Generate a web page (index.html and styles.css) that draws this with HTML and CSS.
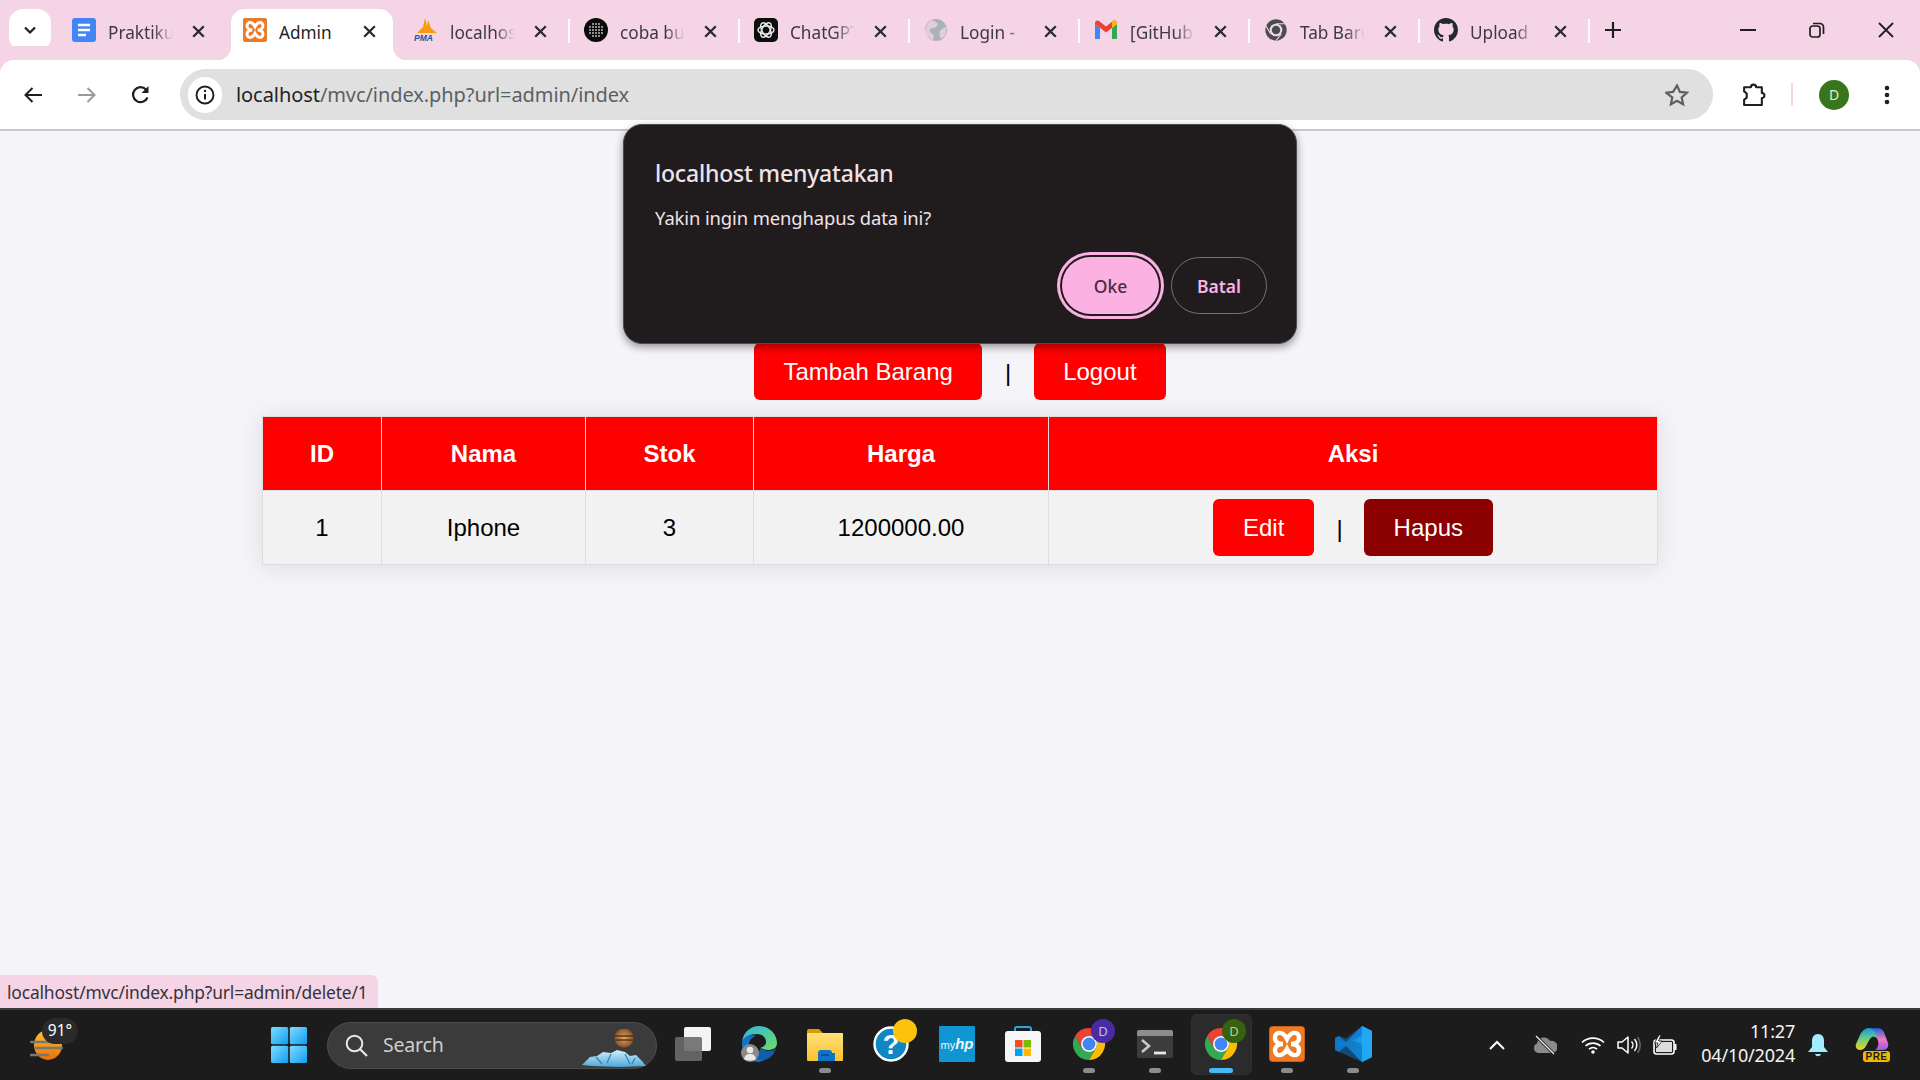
FILE: index.html
```html
<!DOCTYPE html>
<html lang="id">
<head>
<meta charset="utf-8">
<title>Admin</title>
<link rel="stylesheet" href="styles.css">
</head>
<body>
<svg class="defs" width="0" height="0" aria-hidden="true">
  <defs>
    <symbol id="xampp" viewBox="0 0 36 36">
      <rect x="0.5" y="0.5" width="35" height="35" rx="3" fill="#f07a24" stroke="#c9601a"/>
      <path d="M18 13C14 5 6 5 6 12c0 4 4 6 8 6-4 0-8 2-8 6 0 7 8 7 12-1 4 8 12 8 12 1 0-4-4-6-8-6 4 0 8-2 8-6 0-7-8-7-12 1Z" fill="none" stroke="#fff" stroke-width="4.4"/>
    </symbol>
    <symbol id="chrome" viewBox="0 0 36 36">
      <path d="M18 10H31.86A16 16 0 0 0 4.14 10L11.07 22A8 8 0 0 1 18 10Z" fill="#ea4335"/>
      <path d="M4.14 10L11.07 22A8 8 0 0 0 24.93 22L18 34A16 16 0 0 1 4.14 10Z" fill="#34a853"/>
      <path d="M31.86 10H18A8 8 0 0 1 24.93 22L18 34A16 16 0 0 0 31.86 10Z" fill="#fbbc04"/>
      <circle cx="18" cy="18" r="8" fill="#fff"/>
      <circle cx="18" cy="18" r="6.4" fill="#4285f4"/>
    </symbol>
    <symbol id="tabx" viewBox="0 0 13 13">
      <path d="M1.200 1.200l10.600 10.600M11.800 1.200L1.200 11.800" stroke="#2a2a2e" stroke-width="2.300"/>
    </symbol>
    <linearGradient id="winlogo" x1="0" y1="0" x2="1" y2="1">
      <stop offset="0" stop-color="#7fdcff"/>
      <stop offset="1" stop-color="#0f9df0"/>
    </linearGradient>
    <linearGradient id="edgeg" x1="0" y1="0" x2="1" y2="1">
      <stop offset="0" stop-color="#2bb5e0"/>
      <stop offset="1" stop-color="#6fdc6a"/>
    </linearGradient>
    <linearGradient id="sung" x1="0" y1="0" x2="0" y2="1">
      <stop offset="0" stop-color="#fcc62c"/>
      <stop offset="1" stop-color="#ee6d07"/>
    </linearGradient>
    <linearGradient id="foldg" x1="0" y1="0" x2="0" y2="1">
      <stop offset="0" stop-color="#ffe27a"/>
      <stop offset="1" stop-color="#fbc02d"/>
    </linearGradient>
    <linearGradient id="vsg" x1="0" y1="0" x2="1" y2="0">
      <stop offset="0" stop-color="#0d78c9"/>
      <stop offset="1" stop-color="#21a7f5"/>
    </linearGradient>
    <linearGradient id="copl" x1="0" y1="0" x2="0" y2="1">
      <stop offset="0" stop-color="#1c8fe0"/>
      <stop offset="0.45" stop-color="#5fcf8a"/>
      <stop offset="1" stop-color="#f0d020"/>
    </linearGradient>
    <linearGradient id="copr" x1="0" y1="0" x2="0" y2="1">
      <stop offset="0" stop-color="#1b5fd9"/>
      <stop offset="0.5" stop-color="#f07ac0"/>
      <stop offset="1" stop-color="#9a5be8"/>
    </linearGradient>
    <linearGradient id="icebg" x1="0" y1="0" x2="0" y2="1">
      <stop offset="0" stop-color="#d6f0fb"/>
      <stop offset="1" stop-color="#4fa6d8"/>
    </linearGradient>
    <radialGradient id="planet">
      <stop offset="0" stop-color="#e0a56a"/>
      <stop offset="1" stop-color="#8a5326"/>
    </radialGradient>
  </defs>
</svg>

<header class="tabstrip">
  <button class="tab-search"><svg width="14" height="9" viewBox="0 0 14 9"><path d="M2 1.5l5 5 5-5" fill="none" stroke="#1f1f1f" stroke-width="2.2"/></svg></button>
  <div class="tabs">
    <div class="tab tab-first">
      <svg class="fav" viewBox="0 0 24 24"><rect width="24" height="24" rx="3" fill="#4285f4"/><path d="M6 7h12M6 12h12M6 17h8" stroke="#fff" stroke-width="2.4"/></svg>
      <span class="tab-label">Praktiku</span><svg class="tab-x"><use href="#tabx"/></svg>
    </div>
    <div class="tab tab-active">
      <svg class="fav"><use href="#xampp"/></svg>
      <span class="tab-label">Admin</span><svg class="tab-x"><use href="#tabx"/></svg>
    </div>
    <div class="tab tab-sep">
      <svg class="fav" viewBox="0 0 24 24"><path d="M3 15L9 9l2-9 2 8 1-6 3 8 1 1 5 4Z" fill="#f89c0e"/><text x="0" y="23" class="pma">PMA</text></svg>
      <span class="tab-label">localhos</span><svg class="tab-x"><use href="#tabx"/></svg>
    </div>
    <div class="tab tab-sep">
      <svg class="fav" viewBox="0 0 24 24"><circle cx="12" cy="12" r="12" fill="#0a0a0a"/><g fill="#bbb"><circle cx="9" cy="6" r="1"/><circle cx="12" cy="6" r="1"/><circle cx="15" cy="6" r="1"/><circle cx="6" cy="9" r="1"/><circle cx="9" cy="9" r="1"/><circle cx="12" cy="9" r="1"/><circle cx="15" cy="9" r="1"/><circle cx="18" cy="9" r="1"/><circle cx="6" cy="12" r="1"/><circle cx="9" cy="12" r="1"/><circle cx="12" cy="12" r="1"/><circle cx="15" cy="12" r="1"/><circle cx="18" cy="12" r="1"/><circle cx="6" cy="15" r="1"/><circle cx="9" cy="15" r="1"/><circle cx="12" cy="15" r="1"/><circle cx="15" cy="15" r="1"/><circle cx="18" cy="15" r="1"/><circle cx="9" cy="18" r="1"/><circle cx="12" cy="18" r="1"/><circle cx="15" cy="18" r="1"/></g></svg>
      <span class="tab-label">coba bu</span><svg class="tab-x"><use href="#tabx"/></svg>
    </div>
    <div class="tab tab-sep">
      <svg class="fav" viewBox="0 0 24 24"><rect width="24" height="24" rx="5" fill="#0d0d0d"/><g fill="none" stroke="#eee" stroke-width="1.4"><ellipse cx="12" cy="12" rx="8" ry="4"/><ellipse cx="12" cy="12" rx="8" ry="4" transform="rotate(60 12 12)"/><ellipse cx="12" cy="12" rx="8" ry="4" transform="rotate(120 12 12)"/></g></svg>
      <span class="tab-label">ChatGPT</span><svg class="tab-x"><use href="#tabx"/></svg>
    </div>
    <div class="tab tab-sep">
      <svg class="fav" viewBox="0 0 24 24"><circle cx="12" cy="12" r="11" fill="#aab2b9"/><path d="M8 2c4 2 7 3 5 6s-6 1-7 4 3 3 4 6l-1 4c-4-1-7-4-8-8 1-6 3-10 7-12ZM22 9c1 5-1 10-5 12-2-3-2-7 0-9s3-2 5-3Z" fill="#f5d5e5" opacity=".75"/></svg>
      <span class="tab-label">Login - </span><svg class="tab-x"><use href="#tabx"/></svg>
    </div>
    <div class="tab tab-sep">
      <svg class="fav" viewBox="0 0 24 24"><path d="M1 21V6l5 4v11Z" fill="#4285f4"/><path d="M18 21V10l5-4v15Z" fill="#34a853"/><path d="M1 6l11 8.5L23 6v-1c0-2-2.500-3-4-2l-7 5.500L5 3C3.500 2 1 3 1 5Z" fill="#ea4335"/><path d="M18 10l5-4V5c0-2-2.500-3-4-2l-1 1Z" fill="#fbbc04"/></svg>
      <span class="tab-label">[GitHub]</span><svg class="tab-x"><use href="#tabx"/></svg>
    </div>
    <div class="tab tab-sep">
      <svg class="fav" viewBox="0 0 36 36"><circle cx="18" cy="18" r="16" fill="#4a4d50"/><circle cx="18" cy="18" r="9.500" fill="#f5d5e5"/><circle cx="18" cy="18" r="6.400" fill="#4a4d50"/><path d="M18 8.500H33M10 24L3 12M26 24l-8 10" stroke="#f5d5e5" stroke-width="1.600"/></svg>
      <span class="tab-label">Tab Baru</span><svg class="tab-x"><use href="#tabx"/></svg>
    </div>
    <div class="tab tab-sep">
      <svg class="fav" viewBox="0 0 16 16"><path fill="#24292f" d="M8 0C3.58 0 0 3.58 0 8c0 3.54 2.29 6.53 5.47 7.59.4.07.55-.17.55-.38 0-.19-.01-.82-.01-1.49-2.01.37-2.53-.49-2.69-.94-.09-.23-.48-.94-.82-1.13-.28-.15-.68-.52-.01-.53.63-.01 1.08.58 1.23.82.72 1.21 1.87.87 2.33.66.07-.52.28-.87.51-1.07-1.78-.2-3.64-.89-3.64-3.95 0-.87.31-1.59.82-2.15-.08-.2-.36-1.02.08-2.12 0 0 .67-.21 2.2.82.64-.18 1.32-.27 2-.27.68 0 1.36.09 2 .27 1.53-1.04 2.2-.82 2.2-.82.44 1.1.16 1.92.08 2.12.51.56.82 1.27.82 2.15 0 3.07-1.87 3.75-3.65 3.95.29.25.54.73.54 1.48 0 1.07-.01 1.93-.01 2.2 0 .21.15.46.55.38A8.013 8.013 0 0016 8c0-4.42-3.58-8-8-8z"/></svg>
      <span class="tab-label">Upload</span><svg class="tab-x"><use href="#tabx"/></svg>
    </div>
  </div>
  <div class="newtab"><svg width="16" height="16" viewBox="0 0 16 16"><path d="M8 0v16M0 8h16" stroke="#1f1f1f" stroke-width="2.200"/></svg></div>
  <div class="winctl">
    <div class="winbtn"><svg width="16" height="2" viewBox="0 0 16 2"><path d="M0 1h16" stroke="#1f1f1f" stroke-width="2"/></svg></div>
    <div class="winbtn"><svg width="16" height="16" viewBox="0 0 16 16"><rect x="1" y="4" width="10" height="11" rx="2.500" fill="none" stroke="#1f1f1f" stroke-width="1.700"/><path d="M4 1.500h7a3.500 3.500 0 0 1 3.500 3.500v7" fill="none" stroke="#1f1f1f" stroke-width="1.700"/></svg></div>
    <div class="winbtn"><svg width="16" height="16" viewBox="0 0 16 16"><path d="M1 1l14 14M15 1L1 15" stroke="#1f1f1f" stroke-width="1.800"/></svg></div>
  </div>
</header>

<nav class="toolbar">
  <svg class="navicon" viewBox="0 0 20 18"><path d="M19 9H3M9.500 2L2.500 9l7 7" fill="none" stroke="#1f1f1f" stroke-width="2"/></svg>
  <svg class="navicon" viewBox="0 0 20 18"><path d="M1 9h16M10.500 2l7 7-7 7" fill="none" stroke="#9a9a9a" stroke-width="2"/></svg>
  <svg class="navicon" viewBox="0 0 20 20"><path d="M16.500 12.500A7.500 7.500 0 1 1 15 4.500" fill="none" stroke="#1f1f1f" stroke-width="2.200"/><path d="M17.500 1v7h-7Z" fill="#1f1f1f"/></svg>
  <div class="omnibox">
    <div class="chip"><svg width="20" height="20" viewBox="0 0 20 20"><circle cx="10" cy="10" r="8.500" fill="none" stroke="#1f1f1f" stroke-width="1.900"/><path d="M10 9v5.500" stroke="#1f1f1f" stroke-width="2"/><circle cx="10" cy="6" r="1.200" fill="#1f1f1f"/></svg></div>
    <div class="url"><span class="url-host">localhost</span>/mvc/index.php?url=admin/index</div>
    <svg class="star" viewBox="0 0 24 24"><path d="M12 2.500l2.900 6.400 7 .8-5.200 4.700 1.400 6.900-6.100-3.500-6.100 3.500 1.400-6.900L1.100 9.700l7-.8Z" fill="none" stroke="#5f5f5f" stroke-width="2.200"/></svg>
  </div>
  <svg class="puzzle" viewBox="0 0 24 24"><path d="M3 5h6.500a2.500 2.500 0 0 1 5 0H20v5.500a2.500 2.500 0 0 1 0 5V22H3v-5l2.500-2v-4L3 9Z" fill="none" stroke="#1f1f1f" stroke-width="2" stroke-linejoin="round"/></svg>
  <div class="tool-sep"></div>
  <div class="avatar">D</div>
  <svg class="menu" viewBox="0 0 6 20"><circle cx="3" cy="3" r="2.300" fill="#1f1f1f"/><circle cx="3" cy="10" r="2.300" fill="#1f1f1f"/><circle cx="3" cy="17" r="2.300" fill="#1f1f1f"/></svg>
</nav>

<main class="page">
  <div class="actions">
    <a class="btn">Tambah Barang</a>
    <span class="pipe">|</span>
    <a class="btn">Logout</a>
  </div>
  <table class="items">
    <thead>
      <tr>
        <th class="col-id">ID</th>
        <th class="col-nama">Nama</th>
        <th class="col-stok">Stok</th>
        <th class="col-harga">Harga</th>
        <th class="col-aksi">Aksi</th>
      </tr>
    </thead>
    <tbody>
      <tr>
        <td>1</td>
        <td>Iphone</td>
        <td>3</td>
        <td>1200000.00</td>
        <td>
          <div class="row-actions">
            <a class="btn">Edit</a>
            <span class="pipe">|</span>
            <a class="btn btn-danger">Hapus</a>
          </div>
        </td>
      </tr>
    </tbody>
  </table>

  <div class="dialog">
    <div class="dialog-title">localhost menyatakan</div>
    <div class="dialog-body">Yakin ingin menghapus data ini?</div>
    <div class="dialog-buttons">
      <button class="dbtn dbtn-ok">Oke</button>
      <button class="dbtn dbtn-cancel">Batal</button>
    </div>
  </div>

  <div class="status">localhost/mvc/index.php?url=admin/delete/1</div>
</main>

<footer class="taskbar">
  <div class="weather">
    <svg class="weather-icon" viewBox="0 0 33 30"><ellipse cx="18" cy="15" rx="14" ry="15" fill="url(#sung)"/><path d="M1 12h22M6 18h26M0 25h18" stroke="#777" stroke-width="2.400" stroke-linecap="round"/></svg>
    <span class="temp">91°</span>
  </div>
  <div class="start">
    <svg width="36" height="36" viewBox="0 0 36 36"><rect x="0" y="0" width="17.200" height="17.200" rx="1.500" fill="url(#winlogo)"/><rect x="18.800" y="0" width="17.200" height="17.200" rx="1.500" fill="url(#winlogo)"/><rect x="0" y="18.800" width="17.200" height="17.200" rx="1.500" fill="url(#winlogo)"/><rect x="18.800" y="18.800" width="17.200" height="17.200" rx="1.500" fill="url(#winlogo)"/></svg>
  </div>
  <div class="search">
    <svg class="search-icon" width="23" height="23" viewBox="0 0 23 23"><circle cx="9.500" cy="9.500" r="7.800" fill="none" stroke="#e8e8e8" stroke-width="2"/><path d="M15 15l7 7" stroke="#e8e8e8" stroke-width="2.200"/></svg>
    <span class="search-text">Search</span>
    <svg class="search-art" width="66" height="38" viewBox="0 0 66 38"><circle cx="43" cy="9" r="9.500" fill="url(#planet)"/><path d="M34 7h18M34 11h18" stroke="#5e3413" stroke-width="1.300"/><path d="M1 36l8-8 7-1 6-4 8 1 6-3 8 2 5 4 6-1 6 6 4 5-26 1-28-1Z" fill="url(#icebg)"/><path d="M15 28l6 7M30 25l-4 9M44 25l5 10M54 29l-3 6" stroke="#2f86bd" stroke-width="1.300" fill="none"/></svg>
  </div>
  <div class="tasks">
    <div class="task">
      <svg width="36" height="34" viewBox="0 0 36 34"><rect x="9" y="0" width="27" height="24" rx="2" fill="#f4f4f4"/><rect x="0" y="10" width="27" height="24" rx="2" fill="#6c6c6c" fill-opacity=".9"/></svg>
    </div>
    <div class="task">
      <svg width="36" height="36" viewBox="0 0 36 36"><path d="M1 16C2 6 10 0 18 0c10 0 18 8 18 17 0 5-4 7-9 7-4 0-6-1-7-3 3 0 5-2 5-5 0-5-4-8-9-8C9 8 3 11 1 16Z" fill="url(#edgeg)"/><path d="M1 16c2-5 8-8 14-6-5 1-8 6-7 12 1 7 8 13 17 11-3 2-6 3-8 3C8 36 0 27 1 16Z" fill="#1572c8"/><path d="M20 21c1 3 4 4 8 4 3 0 6-1 7-3-2 8-8 12-14 12-4 0-8-2-10-6 4 1 8-2 9-7Z" fill="#0f5fae"/><circle cx="9" cy="27" r="9" fill="#8a8a8a"/><circle cx="9" cy="24" r="3.300" fill="#e8e8e8"/><path d="M3 33c1-4 3-5 6-5s5 1 6 5c-3 2-9 2-12 0Z" fill="#e8e8e8"/></svg>
    </div>
    <div class="task task-open">
      <svg width="36" height="33" viewBox="0 0 36 33"><path d="M0 3a2 2 0 0 1 2-2h10l4 4h18a2 2 0 0 1 2 2v4H0Z" fill="#d99a05"/><rect y="5" width="36" height="28" rx="1" fill="url(#foldg)"/><path d="M11 33v-8a3 3 0 0 1 3-3h8a3 3 0 0 1 3 3h3v8Z" fill="#0f74c9"/><path d="M12 33v-7a4 4 0 0 1 4-4h4a4 4 0 0 1 4 4v7Z" fill="#0f74c9"/><path d="M14 27h8" stroke="#07508f" stroke-width="1.600"/></svg>
    </div>
    <div class="task">
      <svg width="36" height="36" viewBox="0 0 36 36"><circle cx="18" cy="18" r="16.500" fill="#0f86c6" stroke="#fff" stroke-width="2.400"/><text x="18" y="28" class="help-q">?</text></svg>
      <span class="yellow-badge"></span>
    </div>
    <div class="task">
      <div class="myhp">my<em>hp</em></div>
    </div>
    <div class="task">
      <svg width="36" height="36" viewBox="0 0 36 36"><path d="M10 6V3a2 2 0 0 1 2-2h12a2 2 0 0 1 2 2v3" fill="none" stroke="#27a6e0" stroke-width="2"/><rect y="5" width="36" height="31" rx="3" fill="#f6f6f6"/><rect x="10" y="14" width="7.500" height="7.500" fill="#f25022"/><rect x="18.500" y="14" width="7.500" height="7.500" fill="#7fba00"/><rect x="10" y="22.500" width="7.500" height="7.500" fill="#00a4ef"/><rect x="18.500" y="22.500" width="7.500" height="7.500" fill="#ffb900"/></svg>
    </div>
    <div class="task task-open">
      <svg width="36" height="36"><use href="#chrome"/></svg>
      <span class="profile profile-purple">D</span>
    </div>
    <div class="task task-open">
      <svg width="36" height="28" viewBox="0 0 36 28"><rect width="36" height="28" rx="2" fill="#3c3c3c"/><path d="M0 2a2 2 0 0 1 2-2h32a2 2 0 0 1 2 2v4H0Z" fill="#8c8c8c"/><path d="M5 10l7 6-7 6" fill="none" stroke="#c8c8c8" stroke-width="2.600"/><path d="M17 23h12" stroke="#e8e8e8" stroke-width="2.800"/></svg>
    </div>
    <div class="task task-active">
      <svg width="36" height="36"><use href="#chrome"/></svg>
      <span class="profile profile-green">D</span>
    </div>
    <div class="task task-open">
      <svg width="36" height="36"><use href="#xampp"/></svg>
    </div>
    <div class="task task-open">
      <svg width="37" height="36" viewBox="0 0 37 36"><path d="M27 0l10 5v26l-10 5L11 20l-7 6-4-2V12l4-2 7 6Z" fill="url(#vsg)"/><path d="M27 0v36L4 26l-4-2 9-6-9-6 4-2 23 8V9l-16 9-5-2Z" fill="#0f6fbd" opacity=".55"/><path d="M27 0l10 5v26l-10 5V9Z" fill="#21a7f5"/></svg>
    </div>
  </div>
  <div class="tray">
    <div class="tray-wide"><svg width="16" height="10" viewBox="0 0 16 10"><path d="M1 9l7-7 7 7" fill="none" stroke="#fff" stroke-width="2"/></svg></div>
    <div class="tray-wide tray-gap"><svg width="24" height="20" viewBox="0 0 24 20"><path d="M5 18a5 5 0 0 1-1-9.500A7 7 0 0 1 17 6a6 6 0 0 1 3 12Z" fill="#8b8b8b"/><path d="M3 1l18 18" stroke="#1c1c1c" stroke-width="3"/><path d="M3 1l18 18" stroke="#eee" stroke-width="1.300"/></svg></div>
    <div class="tray-item"><svg width="24" height="18" viewBox="0 0 24 18"><path d="M1 6.500a16 16 0 0 1 22 0M4.500 10a11 11 0 0 1 15 0M8 13.200a6 6 0 0 1 8 0" fill="none" stroke="#fff" stroke-width="1.700"/><circle cx="12" cy="16" r="1.800" fill="#fff"/></svg></div>
    <div class="tray-item"><svg width="24" height="18" viewBox="0 0 24 18"><path d="M1 6h4l6-5v16l-6-5H1Z" fill="none" stroke="#fff" stroke-width="1.500" stroke-linejoin="round"/><path d="M14.500 5.500a5 5 0 0 1 0 7M17.500 3a9 9 0 0 1 0 12" fill="none" stroke="#fff" stroke-width="1.500"/><path d="M20.500 1a13 13 0 0 1 0 16" fill="none" stroke="#666" stroke-width="1.500"/></svg></div>
    <div class="tray-item"><svg width="24" height="20" viewBox="0 0 24 20"><rect x="1" y="5" width="20" height="14" rx="2.500" fill="none" stroke="#fff" stroke-width="1.600"/><rect x="3" y="7" width="16" height="10" fill="#ddd"/><path d="M21.500 9h2v6h-2Z" fill="#fff"/><path d="M6 0L1.500 8H5L3.500 13 9 6H5.500L8 0Z" fill="#fff" stroke="#1c1c1c" stroke-width=".8"/></svg></div>
    <div class="clock"><span>11:27</span><span>04/10/2024</span></div>
    <div class="bell"><svg width="20" height="23" viewBox="0 0 20 23"><path d="M10 0c4 0 6 3 6 7v6l4 5H0l4-5V7c0-4 2-7 6-7Z" fill="#a3ebff"/><path d="M7 20h6c-1 3-5 3-6 0Z" fill="#a3ebff"/></svg></div>
    <div class="copilot">
      <svg width="35" height="24" viewBox="0 0 35 24"><path d="M22 1c5 0 7 3 8 7l3 8c1 4-1 7-5 7h-8c3-2 4-6 3-9-1-5-3-11-8-12 2-1 4-1 7-1Z" fill="url(#copr)"/><path d="M9 3c2-2 4-2 6-2 5 1 7 7 8 12-1-2-3-4-6-3-3 2-4 6-6 9-1 2-3 4-6 4-3 0-5-3-4-6l4-9c1-2 2-4 4-5Z" fill="url(#copl)"/></svg>
      <span class="pre">PRE</span>
    </div>
  </div>
</footer>
</body>
</html>
```
FILE: styles.css
```css
* { box-sizing: border-box; }
html, body { margin: 0; height: 100%; }
body {
  display: flex;
  flex-direction: column;
  height: 100vh;
  overflow: hidden;
  background: #f4f4f9;
  font-family: "Noto Sans", "Open Sans", sans-serif;
  color: #1f1f1f;
}
.defs { position: absolute; }

/* tab strip */
.tabstrip {
  display: flex;
  align-items: flex-end;
  height: 60px;
  flex: none;
  background: #f5d5e5;
  padding-left: 9px;
}
.tab-search {
  width: 42px;
  height: 42px;
  margin-bottom: 9px;
  margin-right: 8px;
  border: 0;
  border-radius: 14px;
  background: #fff;
  display: flex;
  align-items: center;
  justify-content: center;
  padding: 0;
}
.tabs { display: flex; height: 51px; }
.tab {
  position: relative;
  display: flex;
  align-items: center;
  width: 170px;
  height: 51px;
  padding: 0 0 9px 14px;
  font-size: 17.200px;
  color: #3b3b3f;
}
.tab-first { width: 172px; padding-left: 13px; }
.tab-active {
  width: 162px;
  margin-right: 7px;
  padding-left: 12px;
  background: #fff;
  border-radius: 14px 14px 0 0;
  color: #1f1f1f;
}
.tab-active::before,
.tab-active::after {
  content: "";
  position: absolute;
  bottom: 0;
  width: 14px;
  height: 14px;
}
.tab-active::before { left: -14px; background: radial-gradient(circle at 0 0, transparent 14px, #fff 14.500px); }
.tab-active::after { right: -14px; background: radial-gradient(circle at 100% 0, transparent 14px, #fff 14.500px); }
.tab-sep::after {
  content: "";
  position: absolute;
  right: 0;
  top: 10px;
  width: 2px;
  height: 24px;
  background: #fff;
}
.fav { width: 24px; height: 24px; flex: none; }
.tab-label {
  width: 65px;
  margin-left: 12px;
  padding-top: 4px;
  flex: none;
  overflow: hidden;
  white-space: nowrap;
  -webkit-mask-image: linear-gradient(to right, #000 70%, transparent 100%);
  mask-image: linear-gradient(to right, #000 70%, transparent 100%);
}
.tab-active .tab-label { -webkit-mask-image: none; mask-image: none; width: 65px; }
.tab-x {
  width: 13px;
  height: 13px;
  margin-left: 19px;
  margin-top: 2px;
  flex: none;
}
.pma { font: italic 700 8.500px "Liberation Sans", sans-serif; fill: #23539c; }
.newtab { width: 16px; height: 16px; margin: 0 0 22px 15px; display: flex; }
.winctl { display: flex; margin-left: auto; align-self: flex-start; }
.winbtn { width: 69px; height: 60px; display: flex; align-items: center; justify-content: center; }

/* toolbar */
.toolbar {
  display: flex;
  align-items: center;
  height: 71px;
  flex: none;
  background: #fff;
  border-bottom: 2px solid #c8c8c8;
  border-radius: 14px 14px 0 0;
  padding: 0 0 0 23px;
  box-shadow: 0 -14px 0 #f5d5e5;
}
.navicon { width: 20px; height: 20px; flex: none; margin-right: 34px; }
.navicon:nth-child(3) { margin-right: 29px; }
.omnibox {
  display: flex;
  align-items: center;
  width: 1533px;
  height: 51px;
  flex: none;
  border-radius: 26px;
  background: #e0e0e0;
  padding: 0 24px 0 8px;
}
.chip {
  width: 34px;
  height: 36px;
  border-radius: 18px;
  background: #fff;
  display: flex;
  align-items: center;
  justify-content: center;
  flex: none;
}
.url { margin-left: 14px; font-size: 20px; color: #5a5f64; letter-spacing: -0.07px; }
.url-host { color: #1f1f1f; }
.star { width: 24px; height: 24px; margin-left: auto; }
.puzzle { width: 25px; height: 25px; margin-left: 28px; flex: none; }
.tool-sep { width: 2px; height: 23px; margin-left: 25px; background: #f5d5e5; flex: none; }
.avatar {
  width: 30px;
  height: 30px;
  margin-left: 26px;
  border-radius: 50%;
  background: #38761d;
  color: #dfeeda;
  font-size: 14px;
  display: flex;
  align-items: center;
  justify-content: center;
  flex: none;
}
.menu { width: 6px; height: 20px; margin-left: 35px; flex: none; }

/* page */
.page {
  position: relative;
  flex: 1;
  min-height: 0;
  padding-top: 212px;
  font-family: "Liberation Sans", Arial, sans-serif;
  font-size: 24px;
  color: #000;
}
.actions { display: flex; justify-content: center; align-items: center; gap: 22.500px; }
.btn {
  display: block;
  height: 57px;
  line-height: 57px;
  padding: 0 30px;
  border-radius: 6px;
  background: #f00;
  color: #fff;
}
.actions .btn { padding: 0 29.500px; }
.btn-danger { background: #8b0000; }
.pipe { display: block; padding-top: 3px; }
.items {
  width: 1396px;
  margin: 16px auto 0;
  table-layout: fixed;
  border-collapse: collapse;
  background: #fff;
  box-shadow: 0 2px 22px rgba(0, 0, 0, 0.1);
}
.items th, .items td {
  height: 74px;
  padding: 0;
  border: 1px solid #ddd;
  text-align: center;
  vertical-align: middle;
}
.items th { background: #f00; color: #fff; font-weight: 700; }
.items td { background: #f2f2f2; }
.col-id { width: 119px; }
.col-nama { width: 204px; }
.col-stok { width: 168px; }
.col-harga { width: 295px; }
.row-actions { display: flex; justify-content: center; align-items: center; gap: 21px; }
.row-actions .pipe { margin-left: 1px; }

/* dialog */
.dialog {
  position: absolute;
  left: 623px;
  top: -7px;
  width: 674px;
  height: 220px;
  padding: 33px 29px 30px 31px;
  border-radius: 19px;
  background: #201c1e;
  border: 1px solid #4c4a4b;
  box-shadow: 0 3px 9px rgba(0, 0, 0, 0.4);
  font-family: "Noto Sans", "Open Sans", sans-serif;
  color: #f0e2e9;
  display: flex;
  flex-direction: column;
}
.dialog-title { font-size: 23px; font-weight: 500; line-height: 30px; letter-spacing: -0.2px; }
.dialog-body { font-size: 18.400px; line-height: 26px; margin-top: 17px; letter-spacing: -0.1px; }
.dialog-buttons { display: flex; justify-content: flex-end; gap: 12px; margin-top: 26px; }
.dbtn {
  height: 57px;
  border-radius: 29px;
  font-family: inherit;
  font-size: 17.500px;
  font-weight: 600;
  padding: 0;
}
.dbtn-ok {
  width: 97px;
  border: 0;
  background: #fbb1e2;
  color: #4f2a45;
  font-weight: 500;
  box-shadow: 0 0 0 2px #201c1e, 0 0 0 5px #fbb1e2;
}
.dbtn-cancel {
  width: 96px;
  border: 1.500px solid #80697a;
  background: transparent;
  color: #fbb1e2;
}
.status {
  position: absolute;
  left: 0;
  bottom: 0;
  height: 33px;
  width: 378px;
  padding-left: 7px;
  background: #f5d5e5;
  border-radius: 0 7px 0 0;
  font-family: "Noto Sans", "Open Sans", sans-serif;
  font-size: 17.400px;
  line-height: 35px;
  color: #33333a;
  white-space: nowrap;
  letter-spacing: -0.15px;
}

/* taskbar */
.taskbar {
  display: flex;
  align-items: center;
  height: 72px;
  flex: none;
  background: #1c1c1c;
  border-top: 2px solid #3a3a3a;
  color: #fff;
  font-family: "Noto Sans", "Open Sans", sans-serif;
}
.weather { position: relative; width: 256px; height: 100%; flex: none; }
.weather-icon { position: absolute; left: 30px; top: 20px; width: 33px; height: 30px; }
.temp {
  position: absolute;
  left: 42px;
  top: 8px;
  width: 36px;
  height: 26px;
  padding-right: 0;
  border-radius: 13px;
  background: #2a2a2a;
  font-size: 15.500px;
  line-height: 25px;
  text-align: center;
}
.start { width: 66px; display: flex; justify-content: center; flex: none; }
.search {
  position: relative;
  display: flex;
  align-items: center;
  width: 330px;
  height: 47px;
  margin-left: 5px;
  border-radius: 24px;
  background: #3b3b3b;
  border: 1.500px solid #4d4d4d;
  flex: none;
}
.search-icon { margin-left: 17px; flex: none; }
.search-text { margin-left: 15px; padding-bottom: 2px; font-size: 19.500px; color: #cfcfcf; letter-spacing: -0.2px; }
.search-art { position: absolute; right: 9px; top: 6px; }
.tasks { display: flex; margin-left: 3px; height: 100%; flex: none; }
.task {
  position: relative;
  width: 66px;
  display: flex;
  align-items: center;
  justify-content: center;
  padding-bottom: 2px;
}
.task-open::after, .task-active::after {
  content: "";
  position: absolute;
  bottom: 7px;
  left: 27px;
  width: 12px;
  height: 5px;
  border-radius: 3px;
  background: #8c8c8c;
}
.task-active::before {
  content: "";
  position: absolute;
  left: 3px;
  top: 4px;
  width: 59px;
  height: 59px;
  border-radius: 6px;
  background: #2b2b2b;
  border: 1px solid #303030;
}
.task-active svg { position: relative; }
.task-active::after { left: 21px; width: 24px; background: #47b9f5; }
.yellow-badge {
  position: absolute;
  left: 35px;
  top: 9px;
  width: 24px;
  height: 24px;
  border-radius: 50%;
  background: #fcc20c;
}
.myhp {
  width: 36px;
  height: 36px;
  border-radius: 1px;
  background: #0f96d2;
  color: #eaf6fc;
  font-family: "Liberation Sans", sans-serif;
  font-size: 11px;
  line-height: 36px;
  text-align: center;
}
.myhp em { font-size: 15px; font-weight: 700; }
.help-q { font: 700 27px "Liberation Sans", sans-serif; fill: #fff; text-anchor: middle; }
.profile {
  position: absolute;
  left: 35px;
  top: 9px;
  width: 24px;
  height: 24px;
  border-radius: 50%;
  font-size: 13px;
  line-height: 24px;
  text-align: center;
}
.profile-purple { background: #4a2aa5; color: #c9bde9; }
.profile-green { left: 34px; background: #38610f; color: #b5cf9d; }
.tray { display: flex; align-items: center; margin-left: auto; padding-right: 17px; flex: none; }
.tray-wide { width: 48px; display: flex; justify-content: center; }
.tray-gap { margin-right: 6px; }
.tray-item { width: 36px; display: flex; justify-content: center; }
.clock {
  width: 112px;
  display: flex;
  flex-direction: column;
  align-items: flex-end;
  padding-bottom: 4px;
  font-size: 18px;
  line-height: 24px;
  color: #f4f4f4;
  letter-spacing: -0.2px;
}
.bell { width: 46px; display: flex; justify-content: center; }
.copilot {
  position: relative;
  width: 62px;
  height: 36px;
  display: flex;
  justify-content: center;
}
.pre {
  position: absolute;
  left: 22px;
  top: 24px;
  width: 27px;
  height: 11px;
  border-radius: 3px;
  background: #f5b800;
  color: #1c1c1c;
  font: 700 10px/11px "Liberation Sans", sans-serif;
  text-align: center;
  letter-spacing: 0.5px;
}
```
